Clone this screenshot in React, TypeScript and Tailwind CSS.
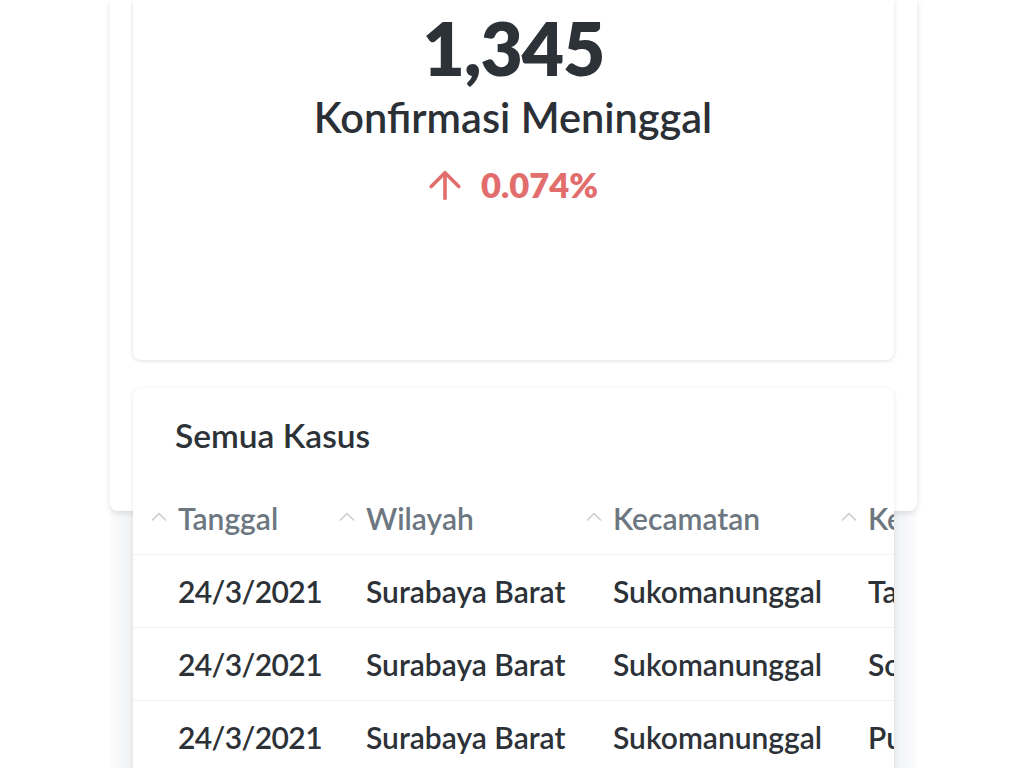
import React from 'react'

type Baris = { tanggal: string; wilayah: string; kecamatan: string; kelurahan: string }

const kolom = [
  { label: 'Tanggal', w: 'w-[188px]' },
  { label: 'Wilayah', w: 'w-[247px]' },
  { label: 'Kecamatan', w: 'w-[255px]' },
  { label: 'Kelurahan', w: 'w-[220px]' },
]

const data: Baris[] = [
  { tanggal: '24/3/2021', wilayah: 'Surabaya Barat', kecamatan: 'Sukomanunggal', kelurahan: 'Tanjungsari' },
  { tanggal: '24/3/2021', wilayah: 'Surabaya Barat', kecamatan: 'Sukomanunggal', kelurahan: 'Sonokwijenan' },
  { tanggal: '24/3/2021', wilayah: 'Surabaya Barat', kecamatan: 'Sukomanunggal', kelurahan: 'Putat Gede' },
  { tanggal: '24/3/2021', wilayah: 'Surabaya Barat', kecamatan: 'Sukomanunggal', kelurahan: 'Simomulyo' },
]

function Caret() {
  return (
    <svg viewBox="0 0 16 9" className="w-[16px] h-[9px] shrink-0" fill="none" stroke="#c9cdd1" strokeWidth="1.6" strokeLinecap="round" strokeLinejoin="round">
      <polyline points="1.5,8 8,1.5 14.5,8" />
    </svg>
  )
}

function PanahNaik() {
  return (
    <svg viewBox="0 0 32 28" className="w-[34px] h-[30px]" fill="none" stroke="#e26d6d" strokeWidth="3.4" strokeLinecap="round" strokeLinejoin="round">
      <path d="M16 26.5V3" />
      <path d="M3 15.5L16 2.5l13 13" />
    </svg>
  )
}

export default function App() {
  return (
    <div className="min-h-screen bg-white font-['Lato','Liberation_Sans',sans-serif] overflow-hidden">
      {/* kolom utama — abu-abu tipis di bawah panel (bayangan kartu tabel) */}
      <div className="ml-[110px] w-[807px] h-[768px] bg-[linear-gradient(to_right,#fcfcfd_0px,#eff1f3_23px,#eff1f3_calc(100%-23px),#fcfcfd_100%)]">
        <div className="h-[511px] bg-white rounded-b-lg shadow-[0_2px_6px_rgba(0,0,0,0.12)] px-[23px]">
          {/* kartu ringkasan */}
          <div className="h-[360px] bg-white rounded-b-lg shadow-[0_1px_4px_rgba(0,0,0,0.13)] flex flex-col items-center pt-[12px]">
            <div className="text-[73px] leading-none font-extrabold text-[#2c3237] tracking-[-1px]">1,345</div>
            <div className="mt-[12px] text-[41.5px] leading-none font-semibold text-[#2a3035] -translate-x-[0.5px]">Konfirmasi Meninggal</div>
            <div className="mt-[29px] flex items-center gap-[19px] text-[34.5px] leading-none font-extrabold text-[#e26d6d] -ml-[1px]">
              <PanahNaik />
              <span>0.074%</span>
            </div>
          </div>

          {/* kartu tabel */}
          <div className="mt-[28px] bg-white rounded-lg shadow-[0_1px_4px_rgba(0,0,0,0.1)] overflow-hidden">
            <h2 className="pt-[31px] pl-[42px] text-[33.5px] leading-none font-semibold text-[#2c3237]">Semua Kasus</h2>
            <div className="mt-[30px] flex items-center h-[72px] pl-[45px] border-b border-[#f1f2f3] whitespace-nowrap">
              {kolom.map(k => (
                <div key={k.label} className={`${k.w} shrink-0 flex items-center`}>
                  <span className="-ml-[27px] mr-[11px] self-start mt-[9px]"><Caret /></span>
                  <span className="text-[30px] leading-none font-semibold text-[#6d7781]">{k.label}</span>
                </div>
              ))}
            </div>
            {data.map((b, i) => (
              <div key={i} className="flex items-center h-[73px] pl-[45px] border-b border-[#f1f2f3] whitespace-nowrap text-[30px] leading-none font-semibold text-[#2c3237]">
                <div className="w-[188px] shrink-0 tracking-[-0.6px]">{b.tanggal}</div>
                <div className="w-[247px] shrink-0">{b.wilayah}</div>
                <div className="w-[255px] shrink-0">{b.kecamatan}</div>
                <div className="w-[220px] shrink-0">{b.kelurahan}</div>
              </div>
            ))}
          </div>
        </div>
      </div>
    </div>
  )
}
